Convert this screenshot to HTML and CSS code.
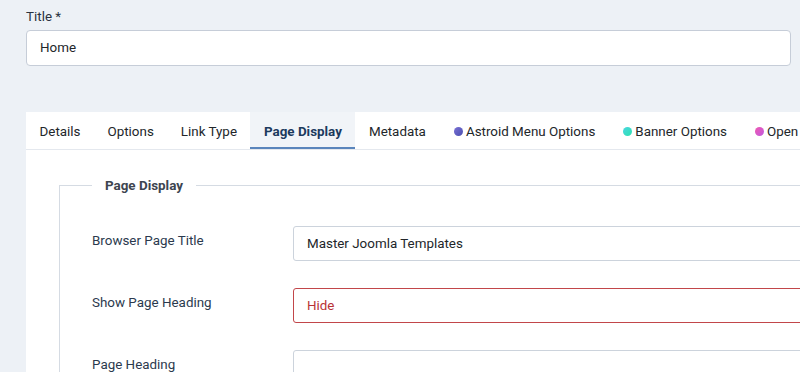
FILE: index.html
```html
<!DOCTYPE html>
<html lang="en">
<head>
    <meta charset="UTF-8">
    <title>Edit Menu Item</title>
    <link rel="stylesheet" href="styles.css">
</head>
<body>
    <div class="page">
        <div class="title-field">
            <label class="title-label">Title *</label>
            <div class="title-input">Home</div>
        </div>

        <div class="card">
            <ul class="tabs">
                <li>Details</li>
                <li>Options</li>
                <li>Link Type</li>
                <li class="active">Page Display</li>
                <li>Metadata</li>
                <li><span class="dot dot-astroid"></span>Astroid Menu Options</li>
                <li><span class="dot dot-banner"></span>Banner Options</li>
                <li><span class="dot dot-open"></span>Open Graph</li>
            </ul>

            <fieldset class="group">
                <legend>Page Display</legend>
                <div class="row">
                    <div class="row-label">Browser Page Title</div>
                    <div class="control">Master Joomla Templates</div>
                </div>
                <div class="row">
                    <div class="row-label">Show Page Heading</div>
                    <div class="control invalid">Hide</div>
                </div>
                <div class="row">
                    <div class="row-label">Page Heading</div>
                    <div class="control"></div>
                </div>
            </fieldset>
        </div>
    </div>
</body>
</html>
```

FILE: styles.css
```css
body {
    margin: 0;
    background-color: #edf1f6;
    font-family: Roboto, "Liberation Sans", sans-serif;
    font-size: 13.4px;
    color: #22262a;
    overflow: hidden;
}
.page {
    padding: 7px 9px 0 26px;
}
.title-label {
    display: block;
    line-height: 20px;
    margin-bottom: 3px;
    color: #2a3340;
}
.title-input {
    background-color: #fff;
    border: 1px solid #c6cdd8;
    border-radius: 4px;
    height: 34px;
    line-height: 34px;
    padding: 0 13px;
}
.card {
    margin-top: 46px;
    margin-right: -60px;
    background-color: #fff;
    height: 400px;
}
.tabs {
    list-style: none;
    margin: 0;
    padding: 0;
    display: flex;
    white-space: nowrap;
    border-bottom: 1px solid #e4e8ee;
}
.tabs li {
    display: flex;
    align-items: center;
    height: 32px;
    padding: 3px 13.5px 0;
    border-bottom: 2px solid transparent;
}
.tabs li.active {
    background-color: #f1f4f8;
    border-bottom-color: #5a85bc;
    color: #1c3a5e;
    font-weight: bold;
}
.dot {
    width: 9px;
    height: 9px;
    border-radius: 50%;
    margin: 0 3px 0 1px;
}
.dot-astroid {
    background: linear-gradient(135deg, #7a70d4, #4a4fb0);
}
.dot-banner {
    background: linear-gradient(135deg, #49d6e0, #2ee0b0);
}
.dot-open {
    background: linear-gradient(135deg, #f058b0, #c05ae0);
}
.group {
    margin: 28px 0 0 33px;
    padding: 33px 0 0 32px;
    border: 1px solid #d5dbe3;
    border-right: none;
    border-bottom: none;
}
.group legend {
    padding: 0 13px;
    font-weight: bold;
    color: #3d4550;
}
.row {
    display: flex;
    align-items: center;
    margin-bottom: 27px;
}
.row-label {
    width: 201px;
    color: #2b3a4e;
    margin-top: -6px;
}
.control {
    flex: 1;
    height: 33px;
    line-height: 33px;
    border: 1px solid #ccd3dc;
    border-radius: 3px;
    padding: 0 13px;
}
.control.invalid {
    border-color: #c2464a;
    color: #b83236;
}
```
